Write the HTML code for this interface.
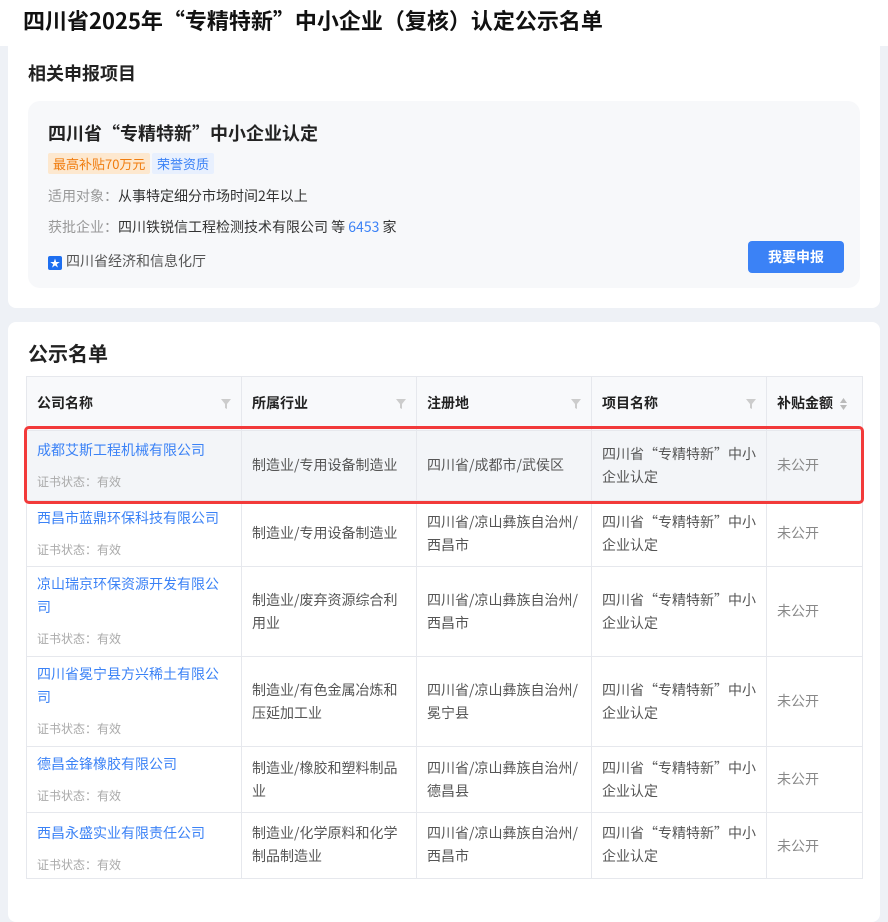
<!DOCTYPE html>
<html><head><meta charset="utf-8"><style>
*{box-sizing:border-box;margin:0;padding:0}
body{width:888px;height:847px;overflow:hidden;background:#eef1f6;font-family:"Noto Sans CJK SC","Liberation Sans",sans-serif;color:#333;position:relative}
.hdr{position:absolute;left:0;top:0;width:888px;height:46px;background:#fff}
.hdr h1{position:absolute;left:23px;top:5px;font-size:22px;font-weight:bold;color:#111;line-height:30px}
.card{position:absolute;left:8px;width:872px;background:#fff;border-radius:8px}
.c1{top:46px;height:262px;border-radius:0 0 8px 8px}
.c2{top:322px;height:600px}
.t2{position:absolute;left:20px;font-weight:bold;color:#222}
.inner{position:absolute;left:20px;top:55px;width:832px;height:187px;background:#f7f8fa;border-radius:12px}
.tag{position:absolute;top:52px;height:21px;line-height:21px;font-size:13px;padding:0 5px;border-radius:2px}
.line{position:absolute;left:20px;font-size:14px;color:#333;line-height:20px}
.line span.g{color:#999}
.btn{position:absolute;left:720px;top:140px;width:96px;height:32px;background:#3b82f6;border-radius:4px;color:#fff;font-weight:bold;font-size:14px;text-align:center;line-height:32px}
table{position:absolute;left:18px;top:54px;border-collapse:collapse;table-layout:fixed;width:836px}
td,th{border:1px solid #e6e8ed;vertical-align:middle;padding:0 10px;font-size:14px;line-height:23px;text-align:left}
th{height:54px;background:#f8f9fb;font-weight:bold;color:#222;position:relative}
th .f{position:absolute;right:10px;top:21px;width:10px;height:12px}
td{color:#555}
td.u{color:#888}
td a{color:#3b82f6;text-decoration:none;display:block}
td .s{color:#aaa;font-size:12px;display:block;margin-top:8px}
tr.hl td{background:#f3f5f8}
.red{position:absolute;left:24px;top:426px;width:840px;height:78px;border:3px solid #f23a3a;border-radius:5px}
</style></head><body>
<div class="hdr"><h1>四川省2025年“专精特新”中小企业（复核）认定公示名单</h1></div>
<div class="card c1">
<div class="t2" style="top:14px;font-size:18px">相关申报项目</div>
<div class="inner">
<div style="position:absolute;left:20px;top:19px;font-size:18px;font-weight:bold;color:#222">四川省“专精特新”中小企业认定</div>
<div class="tag" style="left:20px;background:#fde8cf;color:#f07d10">最高补贴70万元</div>
<div class="tag" style="left:124px;background:#e8f0fe;color:#3b82f6">荣誉资质</div>
<div class="line" style="top:85px"><span class="g">适用对象：</span>从事特定细分市场时间2年以上</div>
<div class="line" style="top:116px"><span class="g">获批企业：</span>四川铁锐信工程检测技术有限公司 等 <span style="color:#3b82f6">6453</span> 家</div>
<div class="line" style="top:150px;color:#555"><span style="display:inline-block;width:14px;height:14px;background:#1e6ff0;border-radius:2px;color:#fff;font-size:10px;line-height:14px;text-align:center;vertical-align:-1px;margin-right:4px">★</span>四川省经济和信息化厅</div>
<div class="btn">我要申报</div>
</div>
</div>
<div class="card c2">
<div class="t2" style="top:16px;font-size:20px">公示名单</div>
<table>
<colgroup><col style="width:215px"><col style="width:175px"><col style="width:175px"><col style="width:175px"><col style="width:96px"></colgroup>
<tr><th>公司名称<svg class="f" viewBox="0 0 10 12"><path d="M0 1h10L6 6v5L4 10V6z" fill="#ccc"/></svg></th><th>所属行业<svg class="f" viewBox="0 0 10 12"><path d="M0 1h10L6 6v5L4 10V6z" fill="#ccc"/></svg></th><th>注册地<svg class="f" viewBox="0 0 10 12"><path d="M0 1h10L6 6v5L4 10V6z" fill="#ccc"/></svg></th><th>项目名称<svg class="f" viewBox="0 0 10 12"><path d="M0 1h10L6 6v5L4 10V6z" fill="#ccc"/></svg></th><th style="padding-right:0">补贴金额<svg style="position:absolute;right:14px;top:20px" width="9" height="14" viewBox="0 0 9 14"><path d="M4.5 1L8 6H1z M4.5 13L8 8H1z" fill="#bbb"/></svg></th></tr>
<tr class="hl" style="height:70px"><td><a>成都艾斯工程机械有限公司</a><span class="s">证书状态：有效</span></td><td>制造业/专用设备制造业</td><td>四川省/成都市/武侯区</td><td>四川省“专精特新”中小企业认定</td><td class="u">未公开</td></tr>
<tr style="height:66px"><td><a>西昌市蓝鼎环保科技有限公司</a><span class="s">证书状态：有效</span></td><td>制造业/专用设备制造业</td><td>四川省/凉山彝族自治州/西昌市</td><td>四川省“专精特新”中小企业认定</td><td class="u">未公开</td></tr>
<tr style="height:90px"><td><a>凉山瑞京环保资源开发有限公司</a><span class="s">证书状态：有效</span></td><td>制造业/废弃资源综合利用业</td><td>四川省/凉山彝族自治州/西昌市</td><td>四川省“专精特新”中小企业认定</td><td class="u">未公开</td></tr>
<tr style="height:90px"><td><a>四川省冕宁县方兴稀土有限公司</a><span class="s">证书状态：有效</span></td><td>制造业/有色金属冶炼和压延加工业</td><td>四川省/凉山彝族自治州/冕宁县</td><td>四川省“专精特新”中小企业认定</td><td class="u">未公开</td></tr>
<tr style="height:66px"><td><a>德昌金锋橡胶有限公司</a><span class="s">证书状态：有效</span></td><td>制造业/橡胶和塑料制品业</td><td>四川省/凉山彝族自治州/德昌县</td><td>四川省“专精特新”中小企业认定</td><td class="u">未公开</td></tr>
<tr style="height:66px"><td style="vertical-align:top;padding-top:9px"><a>西昌永盛实业有限责任公司</a><span class="s">证书状态：有效</span></td><td style="vertical-align:top;padding-top:9px">制造业/化学原料和化学制品制造业</td><td style="vertical-align:top;padding-top:9px">四川省/凉山彝族自治州/西昌市</td><td style="vertical-align:top;padding-top:9px">四川省“专精特新”中小企业认定</td><td class="u" style="vertical-align:top;padding-top:22px">未公开</td></tr>
</table>
</div>
<div class="red"></div>
</body></html>
